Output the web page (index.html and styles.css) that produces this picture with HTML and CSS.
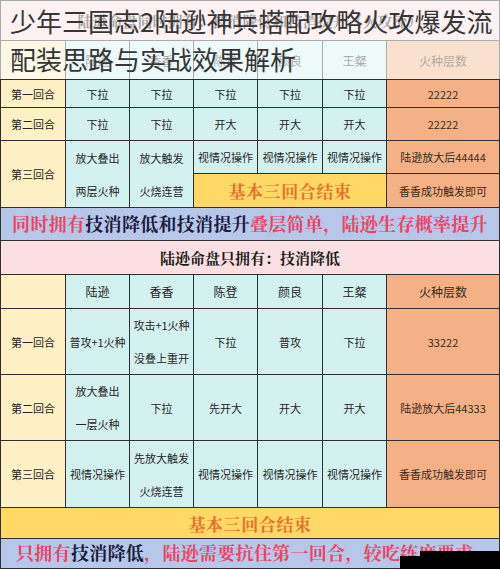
FILE: index.html
```html
<!DOCTYPE html>
<html lang="zh-CN">
<head>
<meta charset="utf-8">
<title>少年三国志2陆逊神兵搭配攻略</title>
<link rel="stylesheet" href="styles.css">
</head>
<body>
<div class="page">
  <div class="sheet">
    <div class="c pink full">陆逊命盘同时拥有：技消降低和技消提升（火攻流）</div>
    <div class="c lbl"></div><div class="c cy hd">陆逊</div><div class="c cy hd">香香</div><div class="c cy hd">陈登</div><div class="c cy hd">颜良</div><div class="c cy hd">王粲</div><div class="c or hd">火种层数</div>

    <div class="c lbl">第一回合</div><div class="c cy">下拉</div><div class="c cy">下拉</div><div class="c cy">下拉</div><div class="c cy">下拉</div><div class="c cy">下拉</div><div class="c or">22222</div>
    <div class="c lbl">第二回合</div><div class="c cy">下拉</div><div class="c cy">下拉</div><div class="c cy">开大</div><div class="c cy">开大</div><div class="c cy">开大</div><div class="c or">22222</div>

    <div class="c lbl span2">第三回合</div>
    <div class="c cy span2 two"><span>放大叠出</span><span>两层火种</span></div>
    <div class="c cy span2 two"><span>放大触发</span><span>火烧连营</span></div>
    <div class="c cy">视情况操作</div><div class="c cy">视情况操作</div><div class="c cy">视情况操作</div><div class="c or">陆逊放大后44444</div>
    <div class="c gold span3 endtxt">基本三回合结束</div><div class="c or">香香成功触发即可</div>

    <div class="c blue full note"><span class="red">同时拥有</span><span class="dark">技消降低和技消提升</span><span class="red">叠层简单，陆逊生存概率提升</span></div>

    <div class="c pink full sub">陆逊命盘只拥有：技消降低</div>
    <div class="c lbl"></div><div class="c cy hd">陆逊</div><div class="c cy hd">香香</div><div class="c cy hd">陈登</div><div class="c cy hd">颜良</div><div class="c cy hd">王粲</div><div class="c or hd">火种层数</div>

    <div class="c lbl">第一回合</div>
    <div class="c cy">普攻+1火种</div>
    <div class="c cy two"><span>攻击+1火种</span><span>没叠上重开</span></div>
    <div class="c cy">下拉</div><div class="c cy">普攻</div><div class="c cy">下拉</div><div class="c or">33222</div>

    <div class="c lbl">第二回合</div>
    <div class="c cy two"><span>放大叠出</span><span>一层火种</span></div>
    <div class="c cy">下拉</div><div class="c cy">先开大</div><div class="c cy">开大</div><div class="c cy">开大</div><div class="c or">陆逊放大后44333</div>

    <div class="c lbl">第三回合</div>
    <div class="c cy">视情况操作</div>
    <div class="c cy two"><span>先放大触发</span><span>火烧连营</span></div>
    <div class="c cy">视情况操作</div><div class="c cy">视情况操作</div><div class="c cy">视情况操作</div><div class="c or">香香成功触发即可</div>

    <div class="c gold full endtxt">基本三回合结束</div>
    <div class="c blue full note left"><span class="red">只拥有</span><span class="dark">技消降低</span><span class="red">，陆逊需要抗住第一回合，较吃练度要求</span></div>
  </div>

  <div class="title">
    <div>少年三国志2陆逊神兵搭配攻略火攻爆发流</div>
    <div>配装思路与实战效果解析</div>
  </div>
  <div class="mask"></div>
</div>
</body>
</html>
```
FILE: styles.css
```css
html, body {
  margin: 0;
  padding: 0;
  background: #ffffff;
}
.page {
  position: relative;
  width: 500px;
  height: 569px;
  overflow: hidden;
  font-family: "Noto Sans CJK SC", "Noto Sans", sans-serif;
}
.sheet {
  display: grid;
  grid-template-columns: 64px 63px 63px 63px 64px 63px 1fr;
  grid-template-rows: 39px 38px 27px 32px 32px 33px 32px 33px 33px 65px 65px 66px 30px 29px;
  gap: 1px;
  padding: 1px;
  background: #2f2f2f;
  width: 500px;
  height: 569px;
  box-sizing: border-box;
}
.c {
  display: flex;
  align-items: center;
  justify-content: center;
  font-size: 11px;
  color: #262626;
  white-space: nowrap;
  overflow: hidden;
}
.hd { font-size: 12px; }
.lbl { background: #fdf0c4; }
.cy { background: #d3f2ef; }
.or { background: #f3b185; color: #3a2b22; }
.pink { background: #fbdfe1; }
.gold { background: #ffd866; }
.blue { background: #b6c7e9; }
.full { grid-column: 1 / -1; }
.span2 { grid-row: span 2; }
.span3 { grid-column: span 3; }
.two {
  flex-direction: column;
  align-items: stretch;
}
.two span {
  flex: 1;
  display: flex;
  align-items: center;
  justify-content: center;
}
.pink.full {
  font-family: "Noto Serif CJK SC", "Noto Sans CJK SC", serif;
  font-size: 15px;
  font-weight: 700;
  color: #1c1c1c;
}
.endtxt {
  font-family: "Noto Serif CJK SC", "Noto Sans CJK SC", serif;
  font-size: 17px;
  font-weight: 700;
  color: #e4712c;
  letter-spacing: 0.6px;
}
.note {
  font-family: "Noto Serif CJK SC", "Noto Sans CJK SC", serif;
  font-size: 18px;
  font-weight: 700;
  letter-spacing: 0.3px;
  padding-bottom: 3px;
}
.note.left {
  justify-content: flex-start;
  padding-left: 15px;
}
.red { color: #ea4563; }
.dark { color: #1b1b3e; }
.title {
  position: absolute;
  left: 0;
  top: 0;
  z-index: 2;
  width: 500px;
  height: 79px;
  box-sizing: border-box;
  padding: 2px 0 0 10px;
  background: rgba(255, 255, 255, 0.6);
  font-size: 26px;
  line-height: 38px;
  color: #363636;
  white-space: nowrap;
}
.mask {
  position: absolute;
  left: 420px;
  top: 551px;
  z-index: 3;
  width: 80px;
  height: 18px;
  background: #000000;
}
.mask::before {
  content: "";
  position: absolute;
  left: -20px;
  top: 5px;
  width: 20px;
  height: 13px;
  background: #000000;
}
```
